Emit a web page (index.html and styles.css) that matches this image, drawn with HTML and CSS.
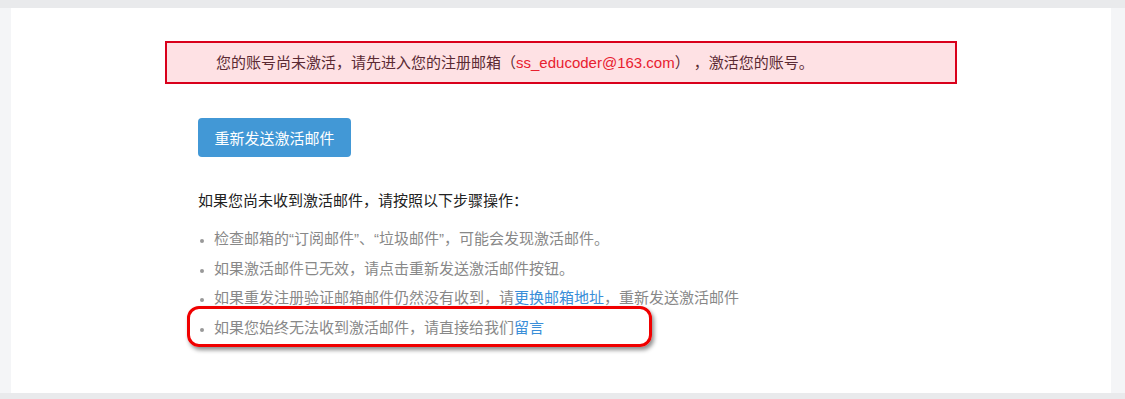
FILE: index.html
```html
<!DOCTYPE html>
<html lang="zh-CN">
<head>
  <meta charset="UTF-8">
  <title>激活账号</title>
  <link rel="stylesheet" href="styles.css">
</head>
<body>
  <div class="page">
    <div class="panel">
      <!-- 未激活提示 -->
      <div class="alert">
        您的账号尚未激活，请先进入您的注册邮箱（<span class="email">ss_educoder@163.com</span>） ，激活您的账号。
      </div>

      <div class="content">
        <button class="resend">重新发送激活邮件</button>

        <p class="steps-title">如果您尚未收到激活邮件，请按照以下步骤操作：</p>
        <ul class="steps">
          <li>检查邮箱的“订阅邮件”、“垃圾邮件”，可能会发现激活邮件。</li>
          <li>如果激活邮件已无效，请点击重新发送激活邮件按钮。</li>
          <li>如果重发注册验证邮箱邮件仍然没有收到，请<a href="#">更换邮箱地址</a>，重新发送激活邮件</li>
          <li class="marked">如果您始终无法收到激活邮件，请直接给我们<a href="#">留言</a></li>
        </ul>
      </div>
    </div>
  </div>
</body>
</html>
```

FILE: styles.css
```css
body {
  margin: 0;
  padding: 0;
  background-color: #e9eaec;
  font-family: "Liberation Sans", Arial, "Noto Sans CJK SC", sans-serif;
  font-size: 15px;
}

.page {
  height: 385px;
  margin-top: 8px;
  background-color: #f4f5f7;
  padding: 0 14px 0 11px;
}

.panel {
  height: 385px;
  background-color: #fff;
  padding-top: 33px;
  box-sizing: border-box;
}

.alert {
  width: 792px;
  height: 43px;
  box-sizing: border-box;
  margin-left: 154px;
  padding: 0 0 0 49px;
  line-height: 39px;
  border: 2px solid #d9001b;
  background-color: #fee1e4;
  color: #5b2a33;
}

.alert .email {
  color: #e8202f;
}

.content {
  margin-left: 187px;
  padding-top: 34px;
}

.resend {
  display: block;
  width: 153px;
  height: 39px;
  padding: 0;
  border: none;
  border-radius: 4px;
  background-color: #4298d6;
  color: #fff;
  font-family: inherit;
  font-size: 15px;
  cursor: pointer;
}

.steps-title {
  margin: 34px 0 0 0;
  line-height: 20px;
  color: #222;
}

.steps {
  margin: 18px 0 0 0;
  padding-left: 16px;
  color: #888;
}

.steps li {
  line-height: 20px;
  margin-bottom: 9.5px;
}

.steps li::marker {
  color: #999;
  font-size: 12px;
}

.steps a {
  color: #3a8ed8;
  text-decoration: none;
}

/* 红框标注 */
.marked {
  position: relative;
}

.marked::after {
  content: "";
  position: absolute;
  left: -27px;
  top: -12px;
  width: 459px;
  height: 35px;
  border: 3px solid #f00000;
  border-radius: 12px;
  box-shadow: 2px 3px 4px rgba(0, 0, 0, 0.45);
}
```
